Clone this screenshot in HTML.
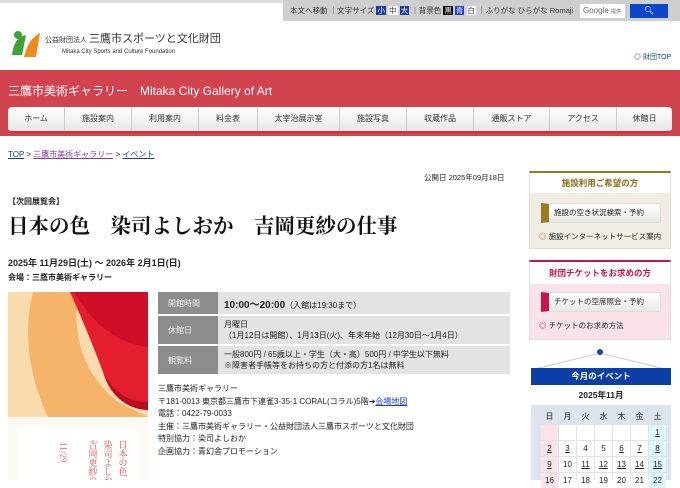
<!DOCTYPE html>
<html><head><meta charset="utf-8"><style>
*{margin:0;padding:0;box-sizing:border-box}
body{width:680px;height:480px;overflow:hidden;background:#fff;font-family:"Liberation Sans","Noto Sans CJK JP",sans-serif;color:#222;position:relative;font-size:9px}
.a{position:absolute;white-space:nowrap}
.top{left:283px;top:0;width:397px;height:21px;background:#cfcfcf}
.topline{left:0;top:0;width:680px;height:3px;background:#ddd}
.red{left:0;top:70px;width:680px;height:66px;background:#d1444f}
.nav{left:8px;top:107px;width:664px;height:26px;background:linear-gradient(#fff,#e6e6e6);border-radius:4px;border-bottom:2px solid #c33;display:flex}
.nav div{border-right:1px solid #ccc;text-align:center;line-height:24px;font-size:8px;color:#333}
.nav div:last-child{border:none}
table{border-collapse:separate;border-spacing:0 2px}
td{background:#e3e3e3;font-size:8px;padding:2px 6px;vertical-align:middle}
td.l{background:#8d8d8d;color:#eee;width:60px;padding-left:10px}
.box{border:1px solid #ddd}
</style></head><body>
<div class="a topline"></div>
<div class="a top"></div>
<div class="a" style="left:290px;top:5px;font-size:7.5px;color:#333">本文へ移動 ｜文字サイズ <span style="background:#1a3f9b;color:#fff;padding:0 1px">小</span> <span style="background:#fff;padding:0 1px">中</span> <span style="background:#1a3f9b;color:#fff;padding:0 1px">大</span> ｜背景色 <span style="background:#000;color:#fff;padding:0 1px">黒</span> <span style="background:#1a3fc9;color:#fff;padding:0 1px">青</span> <span style="background:#fff;padding:0 1px">白</span> ｜ふりがな ひらがな Romaji</div>
<div class="a" style="left:580px;top:4px;width:45px;height:14px;background:#fff;font-size:8px;color:#666;padding:2px 3px">Google <span style="font-size:5px">提供</span></div>
<div class="a" style="left:630px;top:4px;width:38px;height:14px;background:#0a47c9;color:#fff;font-size:8px;text-align:center;line-height:14px">🔍︎</div>
<svg class="a" style="left:8px;top:27px" width="36" height="34"><path d="M4 28 Q6 10 18 8 L14 28Z" fill="#3aa535"/><path d="M16 30 Q20 12 32 6 L28 30Z" fill="#f08a1c"/><circle cx="10" cy="8" r="4" fill="#3aa535"/></svg>
<div class="a" style="left:45px;top:30px;font-size:7px;color:#333">公益財団法人 <span style="font-size:11px">三鷹市スポーツと文化財団</span></div>
<div class="a" style="left:62px;top:49px;font-size:6px;color:#333">Mitaka City Sports and Culture Foundation</div>
<div class="a" style="left:634px;top:52px;font-size:7px;color:#1a3f9b">◎ 財団TOP</div>
<div class="a red"></div>
<div class="a" style="left:8px;top:82px;font-size:12px;color:#fff">三鷹市美術ギャラリー　Mitaka City Gallery of Art</div>
<div class="a nav"><div style="width:57px">ホーム</div><div style="width:67px">施設案内</div><div style="width:67px">利用案内</div><div style="width:59px">料金表</div><div style="width:82px">太宰治展示室</div><div style="width:67px">施設写真</div><div style="width:67px">収蔵作品</div><div style="width:76px">通販ストア</div><div style="width:67px">アクセス</div><div style="width:55px">休館日</div></div>
<div class="a" style="left:8px;top:149px;font-size:8px"><u style="color:#1a3f9b">TOP</u> &gt; <u style="color:#8a3aa0">三鷹市美術ギャラリー</u> &gt; <u style="color:#1a3f9b">イベント</u></div>
<div class="a" style="left:424px;top:172px;font-size:7.5px">公開日 2025年09月18日</div>
<div class="a" style="left:8px;top:196px;font-size:8px;font-weight:bold">【次回展覧会】</div>
<div class="a" style="left:8px;top:209px;font-size:20.5px;font-weight:bold;font-family:'Liberation Serif','Noto Serif CJK SC',serif;color:#111">日本の色　染司よしおか　吉岡更紗の仕事</div>
<div class="a" style="left:8px;top:256px;font-size:9px;font-weight:bold">2025年 11月29日(土) ～ 2026年 2月1日(日)</div>
<div class="a" style="left:8px;top:272px;font-size:8px;font-weight:bold">会場：三鷹市美術ギャラリー</div>
<svg class="a" style="left:8px;top:292px" width="140" height="188"><rect width="140" height="188" fill="#fdfaf3"/><path d="M0 0H140V125H0Z" fill="#f9dcae"/><path d="M25 0 H70 Q60 70 110 110 L140 125 H40 Q10 60 25 0Z" fill="#f6b46a"/><path d="M62 0H140V118 Q105 115 95 80 Q80 40 62 0Z" fill="#e41e2e"/><path d="M66 0 Q95 50 140 55 V0Z" fill="#cf0f28"/><path d="M95 80 Q110 110 140 110 V118 Q110 118 95 80Z" fill="#b80d20"/><rect x="10" y="135" width="120" height="53" fill="#fff"/><g fill="#e44" font-size="9" font-family="Noto Serif CJK SC"><text x="115" y="148" writing-mode="tb">日本の色</text><text x="100" y="148" writing-mode="tb">染司よしおか</text><text x="85" y="148" writing-mode="tb">吉岡更紗の仕事</text><text x="55" y="150" writing-mode="tb" font-size="8">11/29</text></g></svg>
<table class="a" style="left:158px;top:290px;width:352px">
<tr style="height:22px"><td class="l">開館時間</td><td><b style="font-size:10px">10:00～20:00</b>（入館は19:30まで）</td></tr>
<tr style="height:28px"><td class="l">休館日</td><td>月曜日<br>（1月12日は開館）、1月13日(火)、年末年始（12月30日～1月4日）</td></tr>
<tr style="height:28px"><td class="l">観覧料</td><td>一般800円 / 65歳以上・学生（大・高）500円 / 中学生以下無料<br>※障害者手帳等をお持ちの方と付添の方1名は無料</td></tr>
</table>
<div class="a" style="left:158px;top:383px;font-size:8px;line-height:12.5px">三鷹市美術ギャラリー<br>〒181-0013 東京都三鷹市下連雀3-35-1 CORAL(コラル)5階➔<u style="color:#1a3fc9">会場地図</u><br>電話：0422-79-0033<br>主催：三鷹市美術ギャラリー・公益財団法人三鷹市スポーツと文化財団<br>特別協力：染司よしおか<br>企画協力：青幻舎プロモーション</div>
<div class="a box" style="left:529px;top:171px;width:142px;height:78px;background:#f2ede3;border-top:2px solid #9a7a20"></div>
<div class="a" style="left:530px;top:173px;width:140px;height:20px;background:#fff;text-align:center;line-height:20px;font-size:8.5px;font-weight:bold;color:#8a6a10">施設利用ご希望の方</div>
<div class="a" style="left:541px;top:203px;width:120px;height:20px;background:linear-gradient(#fff,#e8e8e8);border:1px solid #ddd;border-left:8px solid #9a7a20;font-size:7.5px;line-height:18px;padding-left:5px">施設の空き状況検索・予約</div>
<div class="a" style="left:539px;top:231px;font-size:7.5px"><span style="color:#9a7a20">◎</span> 施設インターネットサービス案内</div>
<div class="a box" style="left:529px;top:260px;width:142px;height:80px;background:#f9e3e8;border-top:2px solid #c8144b"></div>
<div class="a" style="left:530px;top:262px;width:140px;height:22px;background:#fff;text-align:center;line-height:22px;font-size:8.5px;font-weight:bold;color:#c8144b">財団チケットをお求めの方</div>
<div class="a" style="left:541px;top:292px;width:120px;height:20px;background:linear-gradient(#fff,#e8e8e8);border:1px solid #ddd;border-left:8px solid #c8144b;font-size:7.5px;line-height:18px;padding-left:5px">チケットの空席照会・予約</div>
<div class="a" style="left:539px;top:320px;font-size:7.5px"><span style="color:#c8144b">◎</span> チケットのお求め方法</div>
<svg class="a" style="left:530px;top:345px" width="140" height="25"><path d="M5 24 L70 8 L135 24" stroke="#ccc" fill="none"/><circle cx="70" cy="7" r="3" fill="#1a47b0"/></svg>
<div class="a" style="left:531px;top:368px;width:140px;height:17px;background:#0a3fa8;color:#fff;text-align:center;line-height:17px;font-size:8.5px;font-weight:bold">今月のイベント</div>
<div class="a" style="left:531px;top:385px;width:140px;height:20px;background:#fff;text-align:center;line-height:20px;font-size:8.5px;font-weight:bold">2025年11月</div>
<div class="a" style="left:531px;top:405px;width:140px;height:75px;background:#dde4f0"></div>
<div class="a" style="left:541px;top:409px;font-size:8px;display:grid;grid-template-columns:repeat(7,17px);grid-auto-rows:15px;text-align:center;line-height:15px;gap:1px">
<span>日</span><span>月</span><span>火</span><span>水</span><span>木</span><span>金</span><span>土</span>
<span style="background:#fbe3ea"></span><span style="background:#fff"></span><span style="background:#fff"></span><span style="background:#fff"></span><span style="background:#fff"></span><span style="background:#fff"></span><span style="background:#e0f7fa"><u>1</u></span>
<span style="background:#fbe3ea"><u>2</u></span><span style="background:#fff"><u>3</u></span><span style="background:#fff">4</span><span style="background:#fff">5</span><span style="background:#fff"><u>6</u></span><span style="background:#fff"><u>7</u></span><span style="background:#e0f7fa"><u>8</u></span>
<span style="background:#fbe3ea"><u>9</u></span><span style="background:#fff">10</span><span style="background:#fff"><u>11</u></span><span style="background:#fff"><u>12</u></span><span style="background:#fff"><u>13</u></span><span style="background:#fff"><u>14</u></span><span style="background:#e0f7fa"><u>15</u></span>
<span style="background:#fbe3ea">16</span><span style="background:#fff">17</span><span style="background:#fff">18</span><span style="background:#fff">19</span><span style="background:#fff">20</span><span style="background:#fff">21</span><span style="background:#e0f7fa">22</span>
</div>
</body></html>
